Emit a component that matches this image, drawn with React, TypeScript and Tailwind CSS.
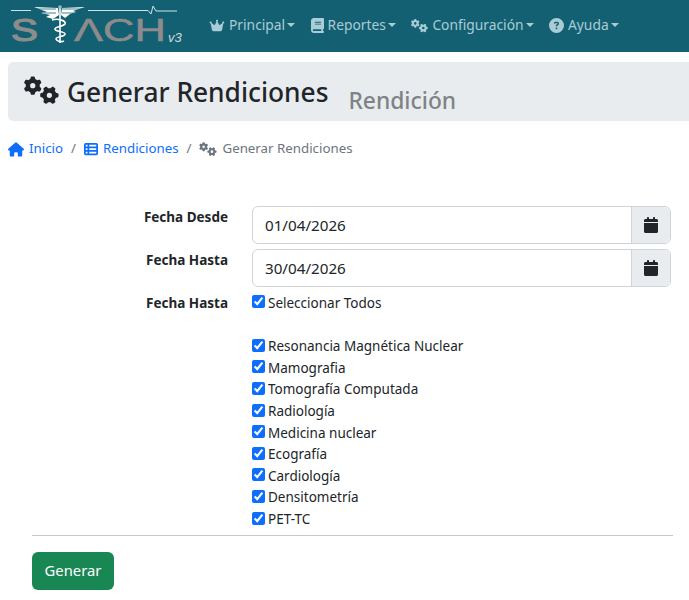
import { FaBook, FaCalendar, FaCircleQuestion, FaCrown, FaGears, FaHouse, FaTableList } from 'react-icons/fa6';

const modalidades = [
  'Resonancia Magnética Nuclear',
  'Mamografia',
  'Tomografía Computada',
  'Radiología',
  'Medicina nuclear',
  'Ecografía',
  'Cardiología',
  'Densitometría',
  'PET-TC',
];

function Logo() {
  return (
    <svg width="190" height="52" viewBox="0 0 190 52" className="shrink-0">
      <path d="M11 11.5H31M88 11.5H148L151 15L153 7L156 12H177" stroke="#cfe3e8" strokeWidth="1" fill="none" />
      <g fill="#8c8c8c" stroke="#8c8c8c" fontFamily="Liberation Sans, sans-serif">
        <text x="11" y="42" fontSize="32" strokeWidth="1.2" textLength="27" lengthAdjust="spacingAndGlyphs">S</text>
        <text x="74" y="42" fontSize="32" strokeWidth="0.5" textLength="92" lengthAdjust="spacingAndGlyphs">ΛCH</text>
      </g>
      <text x="168" y="43" fontSize="13" fontStyle="italic" fill="#cfd8da" fontFamily="Liberation Sans, sans-serif">v3</text>
      {/* alas y caduceo */}
      <path d="M34 8L58 9L59 16L53 20L46 18L50 16L41 14L47 13Z" fill="#fff" />
      <path d="M85 8L62 9L61 16L65 19L70 15L76 13L73 12Z" fill="#fff" />
      <path d="M36 10H56M44 14H56" stroke="#136072" strokeWidth="0.8" />
      <path d="M62 10H82M62 14H74" stroke="#136072" strokeWidth="0.8" />
      <path d="M60 7V44" stroke="#fff" strokeWidth="1.6" />
      <circle cx="60" cy="8" r="1.8" fill="#9fb6bd" />
      <path d="M52 21C58 19 67 22 65 25C63 28 55 27 55 30C55 33 65 32 65 35C65 38 56 37 56 40C57 43 62 43 64 42" stroke="#fff" strokeWidth="1.6" fill="none" />
    </svg>
  );
}

function NavItem({ icon, label }: { icon: React.ReactNode; label: string }) {
  return (
    <a className="flex items-center gap-[4px] text-[13.8px] text-[#a9ccd6]">
      {icon}
      <span>{label}</span>
      <span className="ml-[-2px] border-x-[4px] border-t-[4.5px] border-x-transparent border-t-[#a9ccd6]" />
    </a>
  );
}

function DateRow({ label, value }: { label: string; value: string }) {
  return (
    <div className="flex">
      <label className="w-[228px] pt-[1px] text-right text-[13.5px] font-bold text-[#212529]">{label}</label>
      <div className="ml-6 flex h-[38px] w-[419px] rounded-[6px] border border-[#ced4da]">
        <div className="flex flex-1 items-center px-3 text-[15.2px] text-[#212529]">{value}</div>
        <div className="flex w-[39px] items-center justify-center rounded-r-[6px] border-l border-[#ced4da] bg-[#e9ecef]">
          <FaCalendar className="h-[16px] w-[14px] text-[#212529]" />
        </div>
      </div>
    </div>
  );
}

function Check({ label }: { label: string }) {
  return (
    <label className="flex h-[21.6px] items-center gap-[3px] text-[13.5px] text-[#212529]">
      <input type="checkbox" defaultChecked className="mt-[-2px] h-[13px] w-[13px] accent-[#0d6efd]" />
      <span>{label}</span>
    </label>
  );
}

export default function App() {
  return (
    <div className="min-h-[600px] overflow-hidden bg-white font-['Noto_Sans',sans-serif]">
      <nav className="flex h-[52px] items-center bg-[#136072] pb-[2px]">
        <Logo />
        <div className="ml-[19px] flex gap-[15.5px]">
          <NavItem icon={<FaCrown className="h-[13px] w-[16px]" />} label="Principal" />
          <NavItem icon={<FaBook className="h-[15px] w-[13px]" />} label="Reportes" />
          <NavItem icon={<FaGears className="h-[15px] w-[17px]" />} label="Configuración" />
          <NavItem icon={<FaCircleQuestion className="h-[15px] w-[15px]" />} label="Ayuda" />
        </div>
      </nav>

      <header className="ml-2 mt-[10px] flex h-[59px] items-start rounded-l-[5px] bg-[#e9ecef] pl-4">
        <h1 className="mt-[12px] flex items-center gap-2 text-[26.3px] font-medium leading-[36px] text-[#212529]">
          <FaGears className="mt-[-4px] h-[28px] w-[35px]" />
          Generar Rendiciones
        </h1>
        <span className="ml-5 mt-[21px] text-[22.8px] font-medium leading-[36px] text-[#7f8387]">Rendición</span>
      </header>

      <ol className="ml-2 mt-[18px] flex h-[20px] items-center text-[13.3px]">
        <li className="flex items-center gap-[5px] text-[#0d6efd]"><FaHouse className="h-[15px] w-[16px]" />Inicio</li>
        <li className="px-[8px] text-[#6c757d]">/</li>
        <li className="flex items-center gap-[5px] text-[#0d6efd]"><FaTableList className="h-[14px] w-[14px]" />Rendiciones</li>
        <li className="px-[8px] text-[#6c757d]">/</li>
        <li className="flex items-center gap-[5px] text-[#6c757d]"><FaGears className="h-[14px] w-[18px]" />Generar Rendiciones</li>
      </ol>

      <form className="mt-[47px]">
        <div className="flex flex-col gap-[5px]">
          <DateRow label="Fecha Desde" value="01/04/2026" />
          <DateRow label="Fecha Hasta" value="30/04/2026" />
        </div>
        <div className="mt-[5px] flex">
          <label className="w-[228px] pt-[1px] text-right text-[13.5px] font-bold text-[#212529]">Fecha Hasta</label>
          <div className="ml-6">
            <Check label="Seleccionar Todos" />
            <div className="h-[22px]" />
            {modalidades.map((m) => (
              <Check key={m} label={m} />
            ))}
          </div>
        </div>
        <hr className="ml-8 mr-4 mt-[4.6px] border-[#c8c8c8]" />
        <button type="button" className="ml-8 mt-4 h-[38px] w-[82px] rounded-[6px] bg-[#198754] text-[14.8px] text-white">Generar</button>
      </form>
    </div>
  );
}
